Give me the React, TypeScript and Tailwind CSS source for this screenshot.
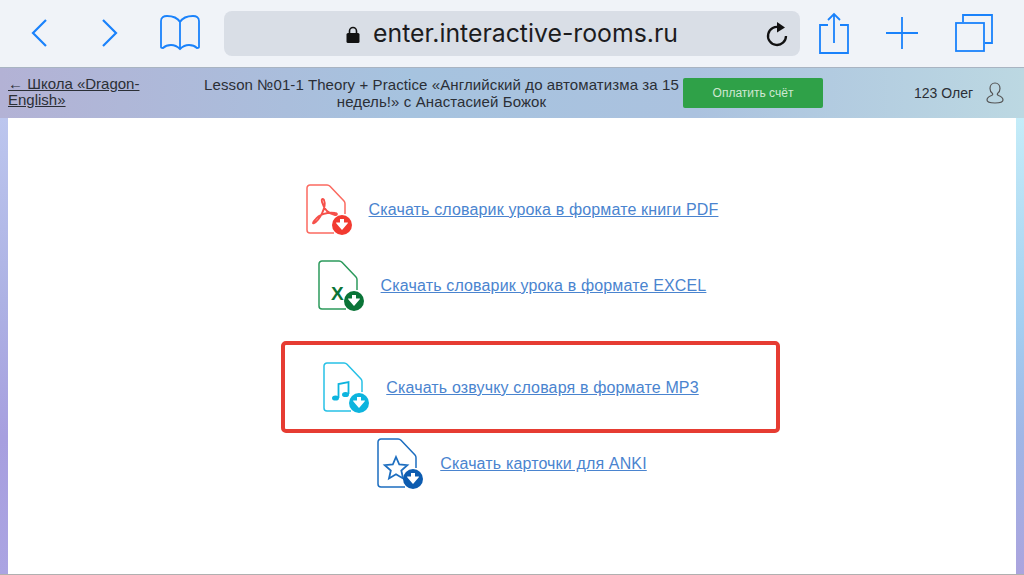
const BLUE = "#1a82fb"

const FileIcon = ({ color, badge, children }: { color: string; badge: string; children: React.ReactNode }) => (
  <svg width="48" height="52" viewBox="0 0 48 52" fill="none" className="shrink-0">
    <path d="M28 49H4a3 3 0 0 1-3-3V4a3 3 0 0 1 3-3h17a4 4 0 0 1 3 1.300L38 17a4 4 0 0 1 1 2.700V30" stroke={color} strokeWidth="1.500" />
    {children}
    <circle cx="36" cy="41" r="10" fill={badge} />
    <path d="M34 35h4v3.500h3.500q1 0 .3.800L36.500 45.500q-.5.500-1 0l-5.300-6.200q-.7-.800.3-.800H34z" fill="#fff" />
  </svg>
)

const links = [
  {
    text: "Скачать словарик урока в формате книги PDF",
    color: "#fb6a60",
    badge: "#f23a30",
    glyph: (
      <path d="M8 39c5-2 13-16 10-23-1-2-3-1-2 2 2 7 7 12 13 13 2 .5 3-2 0-2-7-1-16 1-20 7-3 3-2 4-1 3z" stroke="#f6504a" strokeWidth="1.900" />
    ),
  },
  {
    text: "Скачать словарик урока в формате EXCEL",
    color: "#2c9a5c",
    badge: "#0a7437",
    glyph: <text x="13" y="40" fontSize="19" fontWeight="700" fill="#0a7437" fontFamily="Liberation Sans, sans-serif">X</text>,
  },
]

const Row = ({ text, color, badge, glyph }: { text: string; color: string; badge: string; glyph: React.ReactNode }) => (
  <div className="flex items-center justify-center gap-[15px]">
    <FileIcon color={color} badge={badge}>{glyph}</FileIcon>
    <a href="#" className="text-[16px] tracking-[0.15px] text-[#4a84cf] underline">{text}</a>
  </div>
)

export default function App() {
  return (
    <div className="flex h-[575px] w-[1024px] flex-col overflow-hidden font-['Liberation_Sans',sans-serif]">
      {/* safari toolbar */}
      <div className="flex h-[68px] shrink-0 items-center border-b border-[#a9b4c2] bg-[#f0f3f8] pb-[1px]">
        <svg width="20" height="30" viewBox="0 0 20 30" fill="none" stroke={BLUE} strokeWidth="2.200" className="ml-[30px] shrink-0"><path d="M16 2 3 15l13 13" /></svg>
        <svg width="20" height="30" viewBox="0 0 20 30" fill="none" stroke={BLUE} strokeWidth="2.200" className="ml-[49px] shrink-0"><path d="m4 2 13 13L4 28" /></svg>
        <svg width="42" height="38" viewBox="0 0 42 38" fill="none" stroke={BLUE} strokeWidth="1.800" className="ml-[40px] shrink-0">
          <path d="M21 8C18 3 13 2 8 2 5 2 2 3 2 7v26c0 1 1 1 2 1 2-2 5-3 8-3 4 0 7 2 9 4 2-2 5-4 9-4 3 0 6 1 8 3 1 0 2 0 2-1V7c0-4-3-5-6-5-5 0-10 1-13 6v27" />
        </svg>
        <div className="relative ml-[23px] flex h-[45px] w-[576px] shrink-0 items-center justify-center rounded-[8px] bg-[#d9dee6] pt-[2px]">
          <svg width="14" height="17" viewBox="0 0 14 17" className="mr-[13px]">
            <rect x="0.500" y="7" width="13" height="10" rx="1.500" fill="#111" />
            <path d="M3.500 8V5a3.500 3.500 0 0 1 7 0v3" fill="none" stroke="#111" strokeWidth="1.600" />
          </svg>
          <span className="font-['Inter',sans-serif] text-[24.800px] text-[#1c1c1e]">enter.interactive-rooms.ru</span>
          <svg width="22" height="26" viewBox="0 0 22 26" fill="none" className="absolute right-[12px] top-[10px]">
            <path d="M14 6.500A9 9 0 1 0 20 15" stroke="#111" strokeWidth="2.300" />
            <path d="M11 1l8 5.500-8 5z" fill="#111" />
          </svg>
        </div>
        <svg width="32" height="42" viewBox="0 0 32 42" fill="none" stroke={BLUE} strokeWidth="1.800" className="ml-[18px] shrink-0">
          <path d="M10 13H2v28h28V13h-8M16 31V2M10 8l6-6 6 6" />
        </svg>
        <svg width="34" height="34" viewBox="0 0 34 34" fill="none" stroke={BLUE} strokeWidth="1.800" className="ml-[35px] shrink-0"><path d="M17 1v32M1 17h32" /></svg>
        <svg width="40" height="40" viewBox="0 0 40 40" fill="none" stroke={BLUE} strokeWidth="1.800" className="ml-[35px] shrink-0">
          <path d="M9 9V2h29v28h-7" />
          <rect x="2" y="10" width="28" height="28" />
        </svg>
      </div>

      {/* page header */}
      <div className="flex h-[50px] shrink-0 items-center bg-[linear-gradient(90deg,#b3b2d5_0%,#a6c3df_40%,#abc2df_68%,#bcd8e2_100%)] text-[14px] leading-[16px] text-[#2b2f36]">
        <a href="#" className="mb-[3px] ml-[8px] w-[170px] shrink-0 text-[15px] underline">← Школа «Dragon-English»</a>
        <div className="ml-[26px] w-[475px] shrink-0 text-center text-[15px] leading-[17px] tracking-[0.1px]">
          Lesson №01-1 Theory + Practice «Английский до автоматизма за 15 недель!» с Анастасией Божок
        </div>
        <button className="ml-[4px] h-[30px] w-[140px] shrink-0 rounded-[2px] bg-[#2fa148] text-[12px] text-[#cfe8d2]">Оплатить счёт</button>
        <span className="ml-[91px] shrink-0">123 Олег</span>
        <svg width="18" height="22" viewBox="0 0 18 22" fill="none" stroke="#555" strokeWidth="1.200" className="ml-[13px] shrink-0">
          <path d="M9 1C6 1 4 3.500 4 6.500c0 2.500 1 4 2.500 5 .5 1 0 1.500-1 2C3 14.500 1 15.500 1 18c0 2 3 3 8 3s8-1 8-3c0-2.500-2-3.500-4.500-4.500-1-.5-1.500-1-1-2C13 10.500 14 9 14 6.500 14 3.500 12 1 9 1z" />
        </svg>
      </div>

      {/* content with gradient side strips */}
      <div className="flex min-h-0 flex-1 border-b border-[#b0b0b0]">
        <div className="w-[8px] shrink-0 bg-[linear-gradient(180deg,#bcc6ee_0%,#adb2e4_40%,#a79fdf_70%,#aba4e2_100%)]" />
        <div className="flex flex-1 flex-col items-center bg-white pt-[66px]">
          <div className="flex flex-col gap-[24px]">
            {links.map((l) => <Row key={l.text} {...l} />)}
          </div>
          <div className="ml-[36px] mt-[29px] flex h-[92px] w-[499px] items-center justify-center rounded-[5px] border-4 border-[#e63c32] pr-[38px] pt-[2px]">
            <Row
              text="Скачать озвучку словаря в формате MP3"
              color="#27c1e6"
              badge="#0db4de"
              glyph={
                <g>
                  <path d="M15.500 36V22l10-2v12" stroke="#0db4de" strokeWidth="1.800" />
                  <ellipse cx="12.500" cy="36" rx="3.500" ry="2.600" fill="#0db4de" />
                  <ellipse cx="22.500" cy="32.500" rx="3.500" ry="2.600" fill="#0db4de" />
                </g>
              }
            />
          </div>
          <div className="mt-[5px]">
            <Row
              text="Скачать карточки для ANKI"
              color="#1d6ec0"
              badge="#0d5cb0"
              glyph={<path d="M19 19l3.300 7.500 8 .7-6 5.300 1.800 8-7.100-4.200-7 4.200 1.800-8-6-5.300 8-.7z" stroke="#1d6ec0" strokeWidth="1.800" />}
            />
          </div>
        </div>
        <div className="w-[8px] shrink-0 bg-[linear-gradient(180deg,#c4ecf8_0%,#a4cff1_45%,#a0b6e6_70%,#aba4de_100%)]" />
      </div>
    </div>
  )
}
